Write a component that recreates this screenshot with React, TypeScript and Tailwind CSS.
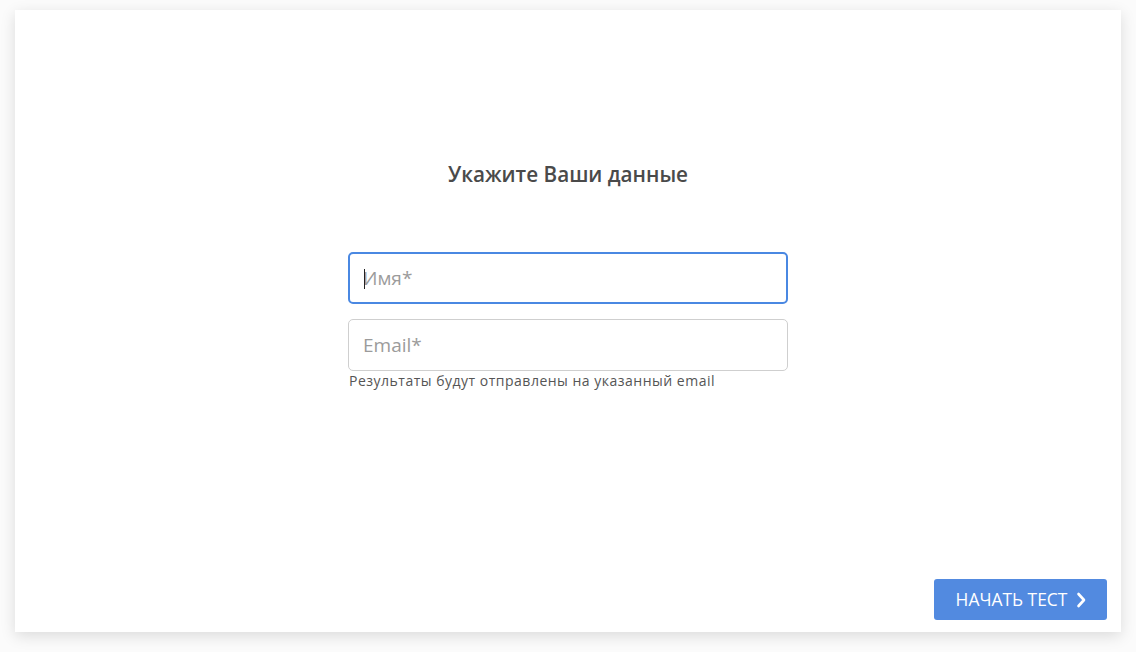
import React from 'react';

const font = { fontFamily: '"Open Sans", "Noto Sans", sans-serif' };

const App: React.FC = () => {
  return (
    <div className="w-[1136px] h-[652px] bg-[#fbfbfb] pt-[10px] pl-[15px]" style={font}>
      <div className="w-[1106px] h-[622px] bg-white shadow-[0_4px_14px_rgba(0,0,0,0.13)] flex flex-col">
        <div className="flex flex-col items-center pt-[150px]">
          <h1 className="text-[20.7px] leading-[28px] font-semibold text-[#4a4a4a]">
            Укажите Ваши данные
          </h1>

          <div className="w-[440px] mt-[64px] flex flex-col">
            {/* focused field */}
            <div className="relative h-[52px] rounded-[5px] border-2 border-[#4a88e2]">
              <input
                className="w-full h-full px-[13px] text-[19px] text-[#333] placeholder:text-[#9b9b9b] outline-none bg-transparent"
                placeholder="Имя*"
              />
              <span className="absolute left-[14px] top-[15px] w-px h-[20px] bg-[#222]" />
            </div>

            <input
              className="mt-[15px] h-[52px] rounded-[5px] border border-[#cfcfcf] px-[14px] text-[19px] text-[#333] placeholder:text-[#9b9b9b] outline-none"
              placeholder="Email*"
            />
            <span className="mt-[1px] pl-[1px] text-[14px] tracking-[0.5px] leading-[18px] text-[#555]">
              Результаты будут отправлены на указанный email
            </span>
          </div>
        </div>

        <button className="mt-auto self-end mr-[14px] mb-[12px] w-[173px] h-[41px] rounded-[3px] bg-[#528ae0] text-white text-[17.4px] flex items-center justify-center gap-[9px] pl-[2px]">
          <span>НАЧАТЬ ТЕСТ</span>
          <svg width="11" height="16" viewBox="0 0 11 16" fill="none">
            <path d="M2.5 2 L8 8 L2.5 14" stroke="white" strokeWidth="2.6" strokeLinecap="round" strokeLinejoin="round" />
          </svg>
        </button>
      </div>
    </div>
  );
};

export default App;
